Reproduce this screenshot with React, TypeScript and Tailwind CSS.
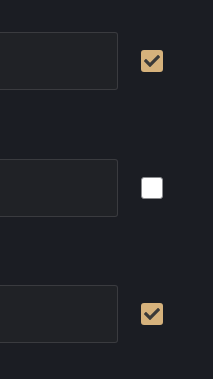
import { FaCheck } from 'react-icons/fa';

const rows = [
    { checked: true, gap: 'mt-0' },
    { checked: false, gap: 'mt-[69px]' },
    { checked: true, gap: 'mt-[68px]' },
];

function Checkbox({ checked }: { checked: boolean }) {
    return checked ? (
        <div className="w-[22px] h-[22px] rounded-[3px] bg-[#d6b27c] flex items-center justify-center">
            <FaCheck className="w-[16px] h-[16px] text-[#3b3a38]" />
        </div>
    ) : (
        <div className="w-[22px] h-[22px] rounded-[3px] bg-white border border-[#8a8b8e]" />
    );
}

export default function App() {
    return (
        <div className="min-h-[379px] w-[213px] overflow-hidden bg-[#1b1d23] pt-[32px] flex flex-col">
            {rows.map((row, i) => (
                <div key={i} className={`flex items-center ${row.gap}`}>
                    <div className="w-[118px] h-[58px] shrink-0 bg-[#202226] border border-l-0 border-[#3a3b3f] rounded-r-[3px]" />
                    <div className="ml-[23px]">
                        <Checkbox checked={row.checked} />
                    </div>
                </div>
            ))}
        </div>
    );
}
